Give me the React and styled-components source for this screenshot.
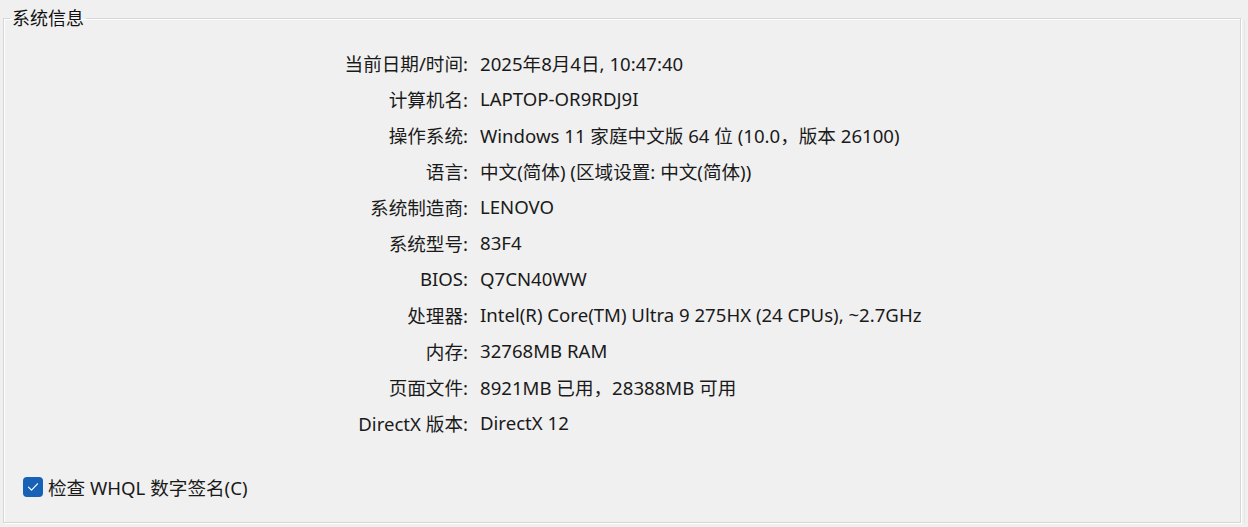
import React from "react";
import styled, { createGlobalStyle } from "styled-components";

const Global = createGlobalStyle`
  html, body { margin: 0; padding: 0; background: #f0f0f0; }
  body {
    font-family: "Noto Sans", "Noto Sans CJK SC", sans-serif;
    color: #1a1a1a;
  }
`;

const Page = styled.div`
  width: 1248px;
  height: 527px;
  box-sizing: border-box;
  padding: 7px 7px 0 3px;
  background: #f0f0f0;
  display: flex;
  position: relative;
`;

const Group = styled.fieldset`
  flex: 1;
  margin: 0;
  height: 516px;
  box-sizing: border-box;
  padding: 0;
  border: 1px solid #d6d6d6;
  box-shadow: inset 1px 1px 0 #ffffff, 1px 1px 0 #ffffff;
  display: flex;
  flex-direction: column;
  min-width: 0;
`;

const Legend = styled.legend`
  margin-left: 6px;
  padding: 0 2px;
  font-size: 18px;
  line-height: 22px;
  color: #111;
`;

const InfoGrid = styled.div`
  display: grid;
  grid-template-columns: 464px 1fr;
  column-gap: 12px;
  grid-auto-rows: 36px;
  margin-top: 15px;
  font-size: 18.6px;
`;

const Label = styled.div`
  display: flex;
  align-items: center;
  justify-content: flex-end;
  white-space: nowrap;
`;

const Value = styled.div`
  display: flex;
  align-items: center;
  white-space: nowrap;
`;

const CheckRow = styled.label`
  margin-top: auto;
  margin-bottom: 22px;
  margin-left: 19px;
  display: flex;
  align-items: center;
  gap: 5px;
  font-size: 18.6px;
`;

const Box = styled.span`
  width: 20px;
  height: 20px;
  border-radius: 4px;
  background: #1762b6;
  display: flex;
  align-items: center;
  justify-content: center;
`;

const EdgeLine = styled.div`
  position: absolute;
  right: 3px;
  top: 20px;
  bottom: 4px;
  width: 1px;
  background: #e6e6e6;
`;

const rows = [
  ["当前日期/时间:", "2025年8月4日, 10:47:40"],
  ["计算机名:", "LAPTOP-OR9RDJ9I"],
  ["操作系统:", "Windows 11 家庭中文版 64 位 (10.0，版本 26100)"],
  ["语言:", "中文(简体) (区域设置: 中文(简体))"],
  ["系统制造商:", "LENOVO"],
  ["系统型号:", "83F4"],
  ["BIOS:", "Q7CN40WW"],
  ["处理器:", "Intel(R) Core(TM) Ultra 9 275HX (24 CPUs), ~2.7GHz"],
  ["内存:", "32768MB RAM"],
  ["页面文件:", "8921MB 已用，28388MB 可用"],
  ["DirectX 版本:", "DirectX 12"],
];

export default function App() {
  return (
    <>
      <Global />
      <Page>
        <Group>
          <Legend>系统信息</Legend>
          <InfoGrid>
            {rows.map(([l, v]) => (
              <React.Fragment key={l}>
                <Label>{l}</Label>
                <Value>{v}</Value>
              </React.Fragment>
            ))}
          </InfoGrid>
          <CheckRow>
            <Box>
              <svg width="12" height="10" viewBox="0 0 12 10">
                <path d="M1.5 5.2 L4.5 8.2 L10.5 1.8" fill="none" stroke="#fff" strokeWidth="1.2" strokeLinecap="round" strokeLinejoin="round" />
              </svg>
            </Box>
            检查 WHQL 数字签名(C)
          </CheckRow>
        </Group>
        <EdgeLine />
      </Page>
    </>
  );
}
